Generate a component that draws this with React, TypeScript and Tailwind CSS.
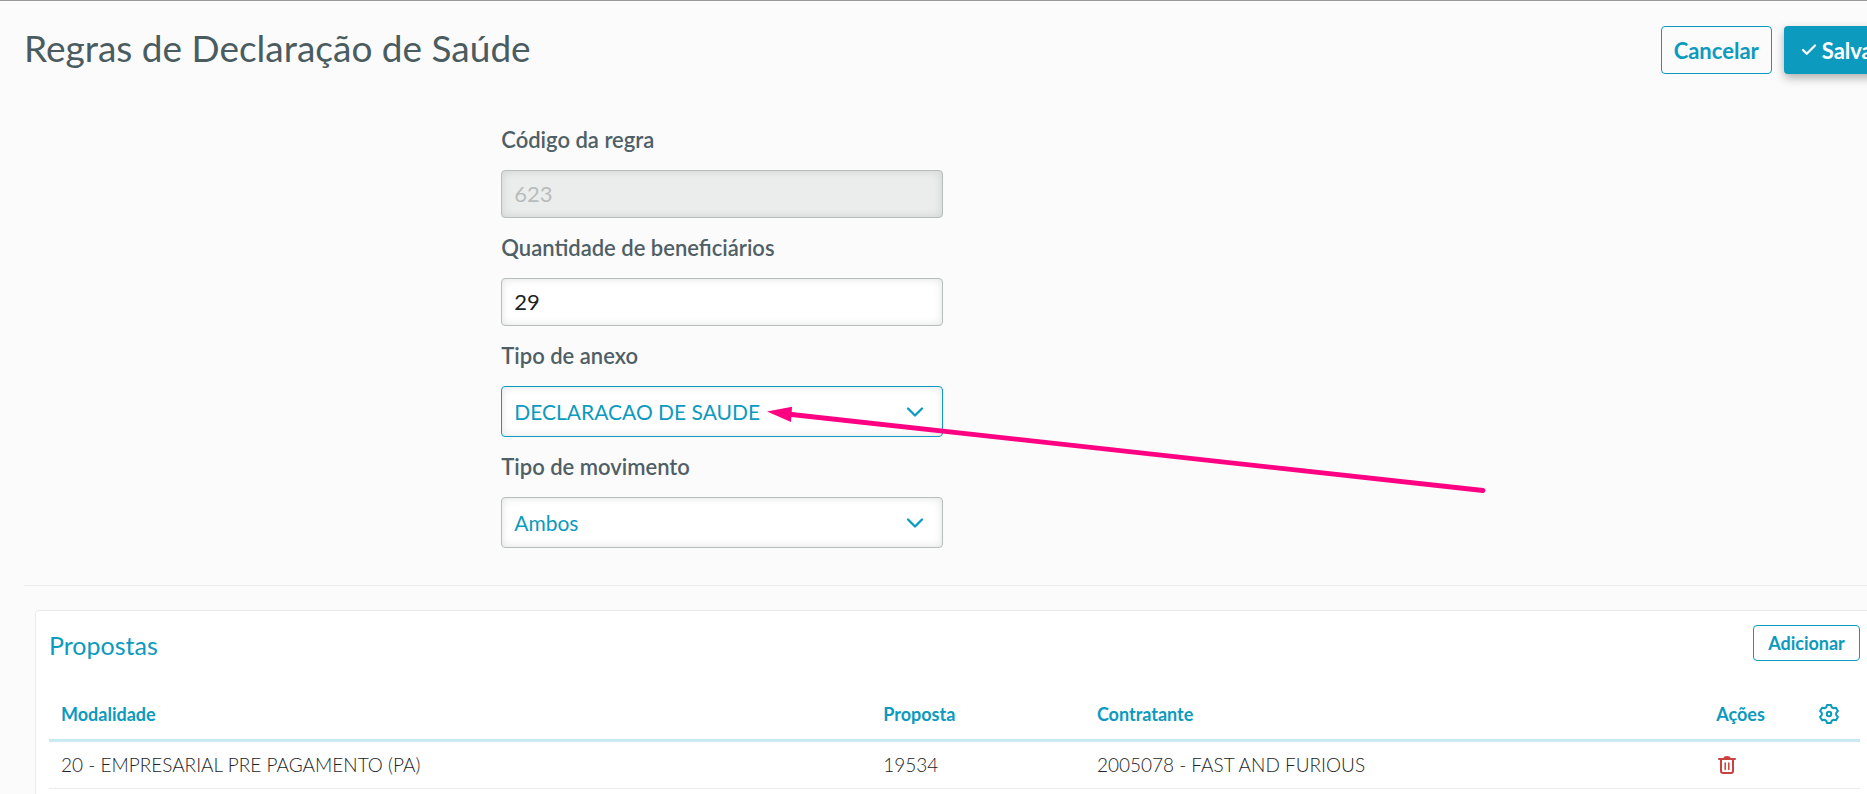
import { useState } from "react";
import { Check, ChevronDown } from "lucide-react";

type SelectFieldProps = {
  id: string;
  label: string;
  value: string;
  options: string[];
  active?: boolean;
  onChange: (value: string) => void;
};

const proposals = [
  {
    modality: "20 - EMPRESARIAL PRE PAGAMENTO (PA)",
    proposal: "19534",
    contractor: "2005078 - FAST AND FURIOUS",
  },
];

function GearIcon() {
  return (
    <svg
      viewBox="0 0 20 20"
      className="h-5 w-5"
      fill="none"
      stroke="currentColor"
      strokeWidth="2"
      strokeLinejoin="round"
    >
      <path d="M8 1h4l.7 2.2q1 .4 1.7 1.1l2.5-.6 2 3.4L17.2 8.900v2.200l1.700 1.800-2 3.400-2.500-.6q-.7.7-1.700 1.100L12 19H8l-.7-2.200q-1-.4-1.700-1.100l-2.500.6-2-3.400 1.700-1.800V8.900L1.100 7.100l2-3.400 2.500.6q.7-.7 1.700-1.100z" />
      <circle cx="10" cy="10" r="2.2" />
    </svg>
  );
}

function TrashIcon() {
  return (
    <svg
      viewBox="0 0 18 18"
      className="h-[18px] w-[18px]"
      fill="none"
      stroke="currentColor"
      strokeWidth="2"
      strokeLinecap="round"
      strokeLinejoin="round"
    >
      <path d="M1 3h16M6 2.5Q6.5 1 9 1t3 1.5M3 3.5v11.5q0 2 2 2h8q2 0 2-2V3.5" />
      <path d="M7.2 7v6.5M10.8 7v6.5" strokeWidth="1.5" />
    </svg>
  );
}

function SelectField({
  id,
  label,
  value,
  options,
  active,
  onChange,
}: SelectFieldProps) {
  return (
    <div>
      <label
        htmlFor={id}
        className="block py-4 text-[22px] leading-7 font-semibold text-[#4f5f66]"
      >
        {label}
      </label>
      <div className="relative">
        <select
          id={id}
          value={value}
          onChange={(event) => onChange(event.target.value)}
          className={`block h-[51px] w-full appearance-none rounded border bg-white px-3 text-[21px] text-[#0c9abe] shadow-[inset_0_0_8px_rgba(0,0,0,0.12)] outline-none ${
            active ? "border-[#0c9abe]" : "border-[#b6bdbc]"
          }`}
        >
          {options.map((option) => (
            <option key={option}>{option}</option>
          ))}
        </select>
        <ChevronDown
          size={28}
          strokeWidth={2}
          className="pointer-events-none absolute top-3 right-3.5 text-[#0c9abe]"
        />
        {active ? <Pointer /> : null}
      </div>
    </div>
  );
}

// Arrow annotation that lies over the form and points at the selected value
function Pointer() {
  return (
    <svg
      width="722"
      height="92"
      viewBox="0 0 722 92"
      className="pointer-events-none absolute top-4 left-[266px] max-w-none"
      fill="#ff0083"
    >
      <path
        d="M20 12L716 88.5"
        stroke="#ff0083"
        strokeWidth="4.8"
        strokeLinecap="round"
      />
      <path d="M0 9.5L25 4.8L24 20z" />
    </svg>
  );
}

export default function App() {
  const [quantity, setQuantity] = useState("29");
  const [attachment, setAttachment] = useState("DECLARACAO DE SAUDE");
  const [movement, setMovement] = useState("Ambos");

  return (
    <div className="h-screen overflow-hidden border-t border-[#999] bg-[#fbfbfb] font-[Lato,sans-serif]">
      <main className="-mr-[18px] pl-6">
        <header className="-mr-3 flex items-start justify-between pt-[25px]">
          <h1 className="text-[37px] leading-[44px] text-[#4a5c60]">
            Regras de Declaração de Saúde
          </h1>
          <div className="flex gap-3">
            <button
              type="button"
              className="h-12 w-[111px] rounded border border-[#0c9abe] text-[22px] font-bold text-[#0c9abe]"
            >
              Cancelar
            </button>
            <button
              type="button"
              className="flex h-12 items-center gap-1 rounded bg-[#0c9abe] px-4 text-[22px] font-bold text-white shadow-[0_4px_10px_rgba(0,0,0,0.3)]"
            >
              <Check size={18} strokeWidth={3} />
              Salvar
            </button>
          </div>
        </header>

        <form className="grid grid-cols-4 border-b border-[#ebebeb] pt-9 pb-[37px]">
          <div className="col-start-2 px-3">
            <label
              htmlFor="code"
              className="block py-4 text-[22px] leading-7 font-semibold text-[#4f5f66]"
            >
              Código da regra
            </label>
            <input
              id="code"
              value="623"
              disabled
              className="block h-12 w-full rounded border border-[#b6bdbc] bg-[#ebedec] px-3 pb-0.5 text-[22px] text-[#b9bcbd] shadow-[inset_0_0_10px_rgba(0,0,0,0.12)]"
            />
            <label
              htmlFor="quantity"
              className="block py-4 text-[22px] leading-7 font-semibold text-[#4f5f66]"
            >
              Quantidade de beneficiários
            </label>
            <input
              id="quantity"
              value={quantity}
              onChange={(event) => setQuantity(event.target.value)}
              className="block h-12 w-full rounded border border-[#b6bdbc] bg-white px-3 pb-0.5 text-[22px] text-[#1d2426] shadow-[inset_0_0_8px_rgba(0,0,0,0.12)] outline-none"
            />
            <SelectField
              id="attachment"
              label="Tipo de anexo"
              value={attachment}
              options={["DECLARACAO DE SAUDE"]}
              active
              onChange={setAttachment}
            />
            <SelectField
              id="movement"
              label="Tipo de movimento"
              value={movement}
              options={["Ambos"]}
              onChange={setMovement}
            />
          </div>
        </form>

        <section className="mx-[11px] mt-6 rounded border border-[#ebebeb] bg-white px-[13px] pt-3.5 pb-10">
          <div className="flex items-center justify-between">
            <h2 className="pt-1 text-[25px] leading-8 text-[#0c9abe]">
              Propostas
            </h2>
            <button
              type="button"
              className="h-9 w-[107px] rounded border border-[#0c9abe] text-lg leading-7 font-bold text-[#0c9abe]"
            >
              Adicionar
            </button>
          </div>
          <table className="mt-7 w-full table-fixed border-collapse text-left text-lg">
            <colgroup>
              <col className="w-[45.4%]" />
              <col className="w-[11.8%]" />
              <col className="w-[34.2%]" />
              <col className="w-[5.7%]" />
              <col />
            </colgroup>
            <thead>
              <tr className="h-[51px] border-b-3 border-[#c9eaf4] text-[#0c9abe]">
                <th className="px-3">Modalidade</th>
                <th className="px-3">Proposta</th>
                <th className="px-3">Contratante</th>
                <th className="px-3">Ações</th>
                <th className="px-3">
                  <button
                    type="button"
                    aria-label="Configurar colunas"
                    className="block"
                  >
                    <GearIcon />
                  </button>
                </th>
              </tr>
            </thead>
            <tbody>
              {proposals.map((item) => (
                <tr
                  key={item.proposal}
                  className="h-12 border-b border-[#ebebeb] text-[19px] font-light text-[#1d2426]"
                >
                  <td className="px-3">{item.modality}</td>
                  <td className="px-3">{item.proposal}</td>
                  <td className="px-3">{item.contractor}</td>
                  <td className="px-3">
                    <button
                      type="button"
                      aria-label="Excluir"
                      className="ml-0.5 block text-[#c9423f]"
                    >
                      <TrashIcon />
                    </button>
                  </td>
                  <td />
                </tr>
              ))}
            </tbody>
          </table>
        </section>
      </main>
    </div>
  );
}
